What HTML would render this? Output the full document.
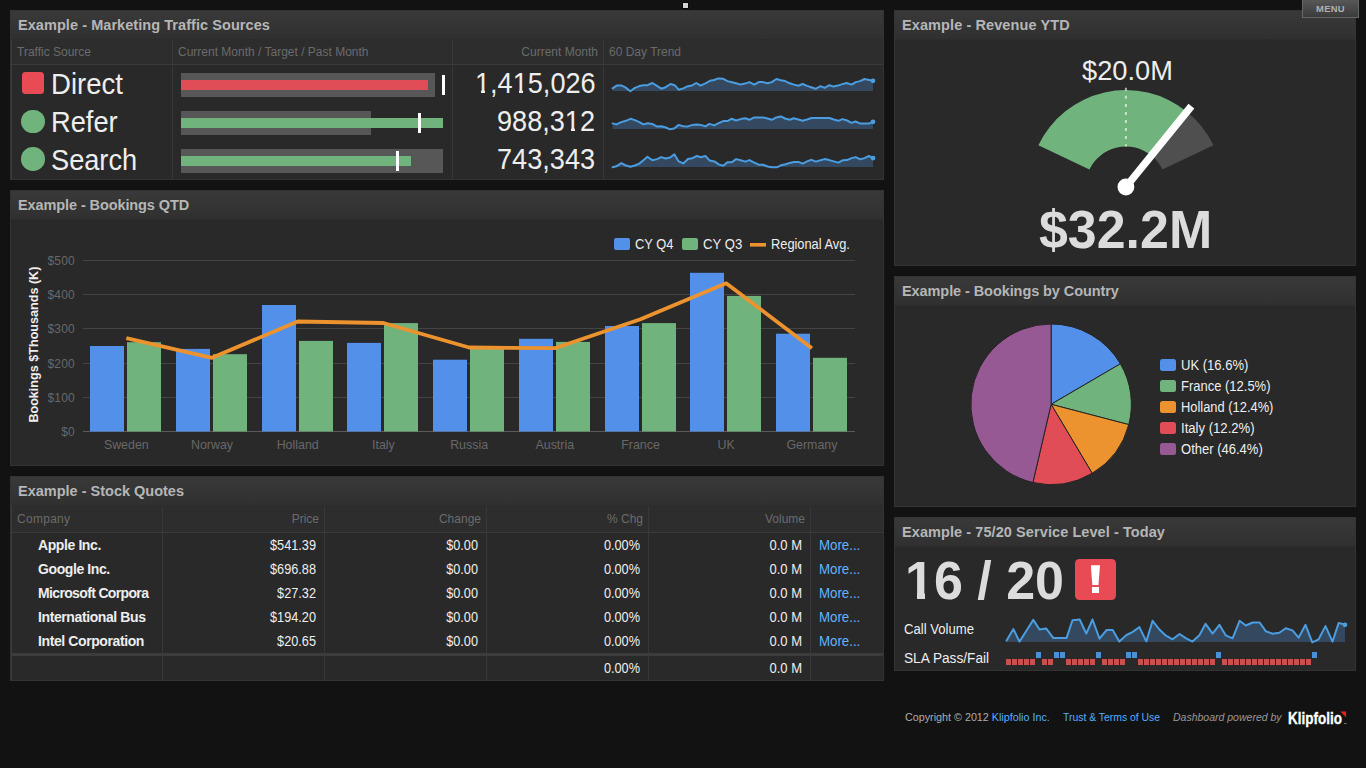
<!DOCTYPE html>
<html><head><meta charset="utf-8"><title>Dashboard</title>
<style>
html,body{margin:0;padding:0;}
body{width:1366px;height:768px;overflow:hidden;background:#121212;font-family:"Liberation Sans",sans-serif;color:#eee;position:relative;}
.p{position:absolute;background:#292929;border:1px solid #333;box-sizing:border-box;}
.h{position:absolute;left:0;top:0;right:0;height:28px;background:linear-gradient(#393939,#303030);border-bottom:1px solid #2c2c2c;}
.h span{position:absolute;left:7px;top:6px;font-weight:bold;font-size:14.5px;line-height:17px;color:#b6b6b6;letter-spacing:0.06px;white-space:nowrap;}
.t{position:absolute;white-space:nowrap;}
.th{position:absolute;font-size:12px;color:#6b6b6b;line-height:14px;white-space:nowrap;}
.vl{position:absolute;width:1px;background:#383838;}
.hl{position:absolute;height:1px;background:#3a3a3a;}
svg{position:absolute;left:0;top:0;}
.cv{position:absolute;background:#292929;}
svg text{font-family:"Liberation Sans",sans-serif;}
a{color:#62b3ff;text-decoration:none;}
</style></head><body>

<!-- top widgets -->
<div style="position:absolute;left:683px;top:3px;width:5px;height:5px;background:#d2d2d2;box-shadow:0 0 0 1px #060606;"></div>


<!-- panel 1 : traffic sources -->
<div class="p" style="left:10px;top:10px;width:874px;height:170px;"><div class="h"><span style="letter-spacing:0.06px">Example - Marketing Traffic Sources</span></div>
<div style="position:absolute;left:0;top:29px;right:0;height:25px;background:#2d2d2d;"></div></div>
<div class="hl" style="left:11px;top:64px;width:872px;"></div>
<div class="vl" style="left:11px;top:40px;height:139px;background:#3b3b3b;"></div>
<div class="vl" style="left:172px;top:40px;height:139px;"></div>
<div class="vl" style="left:452px;top:40px;height:139px;"></div>
<div class="vl" style="left:603px;top:40px;height:139px;"></div>
<div class="th" style="left:17px;top:45px;">Traffic Source</div>
<div class="th" style="left:178px;top:45px;">Current Month / Target / Past Month</div>
<div class="th" style="left:452px;top:45px;width:146px;text-align:right;">Current Month</div>
<div class="th" style="left:609px;top:45px;">60 Day Trend</div>

<div style="position:absolute;left:22.3px;top:72px;width:22px;height:22px;border-radius:3.5px;background:#e94b55;"></div>
<div style="position:absolute;left:21.3px;top:109.5px;width:23.6px;height:23.6px;border-radius:50%;background:#71b37c;"></div>
<div style="position:absolute;left:21.3px;top:147.4px;width:23.6px;height:23.6px;border-radius:50%;background:#71b37c;"></div>
<div class="t" style="left:51.16px;top:70.0px;font-size:29px;line-height:1;font-weight:normal;color:#eee;transform-origin:0 0;transform:scaleX(0.9497);">Direct</div>
<div class="t" style="left:51.18px;top:108.0px;font-size:29px;line-height:1;font-weight:normal;color:#eee;transform-origin:0 0;transform:scaleX(0.9405);">Refer</div>
<div class="t" style="left:51.07px;top:146.0px;font-size:29px;line-height:1;font-weight:normal;color:#eee;transform-origin:0 0;transform:scaleX(0.9372);">Search</div>

<!-- bullet bars -->
<div style="position:absolute;left:181px;top:73px;width:254px;height:24px;background:#575757;"></div>
<div style="position:absolute;left:181px;top:80px;width:247px;height:10px;background:#e14d57;"></div>
<div style="position:absolute;left:442px;top:75px;width:3px;height:20px;background:#fff;"></div>
<div style="position:absolute;left:181px;top:111px;width:190px;height:24px;background:#575757;"></div>
<div style="position:absolute;left:181px;top:118px;width:262px;height:10px;background:#71b37c;"></div>
<div style="position:absolute;left:418px;top:113px;width:3px;height:20px;background:#fff;"></div>
<div style="position:absolute;left:181px;top:149px;width:262px;height:24px;background:#575757;"></div>
<div style="position:absolute;left:181px;top:156px;width:230px;height:10px;background:#71b37c;"></div>
<div style="position:absolute;left:396px;top:151px;width:3px;height:20px;background:#fff;"></div>

<div class="t" style="left:474.55px;top:68.0px;font-size:29.5px;line-height:1;font-weight:normal;color:#eee;transform-origin:0 0;transform:scaleX(0.9194);">1,415,026</div>
<div class="t" style="left:496.58px;top:106.0px;font-size:29.5px;line-height:1;font-weight:normal;color:#eee;transform-origin:0 0;transform:scaleX(0.9191);">988,312</div>
<div class="t" style="left:496.51px;top:144.0px;font-size:29.5px;line-height:1;font-weight:normal;color:#eee;transform-origin:0 0;transform:scaleX(0.9198);">743,343</div>

<!-- panel 2 : bookings QTD -->
<div class="p" style="left:10px;top:190px;width:874px;height:276px;"><div class="h"><span style="letter-spacing:-0.097px">Example - Bookings QTD</span></div></div>

<!-- panel 3 : stock quotes -->
<div class="p" style="left:10px;top:476px;width:874px;height:205px;"><div class="h"><span style="letter-spacing:0.0px">Example - Stock Quotes</span></div>
<div style="position:absolute;left:0;top:29px;right:0;height:27px;background:#2d2d2d;"></div></div>
<div class="hl" style="left:11px;top:532px;width:872px;"></div>
<div class="vl" style="left:162px;top:506px;height:174px;"></div>
<div class="vl" style="left:324px;top:506px;height:174px;"></div>
<div class="vl" style="left:486px;top:506px;height:174px;"></div>
<div class="vl" style="left:648px;top:506px;height:174px;"></div>
<div class="vl" style="left:810px;top:506px;height:174px;"></div>
<div class="vl" style="left:11px;top:506px;height:174px;background:#3b3b3b;"></div>
<div style="position:absolute;left:11px;top:653px;width:872px;height:3px;background:#3c3c3c;"></div>
<div class="th" style="left:17px;top:512px;letter-spacing:0.28px;">Company</div>
<div class="th" style="left:169px;width:150px;text-align:right;top:512px;">Price</div>
<div class="th" style="left:331px;width:150px;text-align:right;top:512px;">Change</div>
<div class="th" style="left:493px;width:150px;text-align:right;top:512px;">% Chg</div>
<div class="th" style="left:655px;width:150px;text-align:right;top:512px;">Volume</div>
<div class="t" style="left:38px;top:537px;font-size:14px;line-height:16px;font-weight:bold;letter-spacing:-0.4px;color:#eee;">Apple Inc.</div>
<div class="t" style="left:166px;width:150px;text-align:right;top:537px;font-size:14px;line-height:16px;transform:scaleX(0.908);transform-origin:100% 50%;color:#eee;">$541.39</div>
<div class="t" style="left:328px;width:150px;text-align:right;top:537px;font-size:14px;line-height:16px;transform:scaleX(0.908);transform-origin:100% 50%;color:#eee;">$0.00</div>
<div class="t" style="left:490px;width:150px;text-align:right;top:537px;font-size:14px;line-height:16px;transform:scaleX(0.908);transform-origin:100% 50%;color:#eee;">0.00%</div>
<div class="t" style="left:652px;width:150px;text-align:right;top:537px;font-size:14px;line-height:16px;transform:scaleX(0.93);transform-origin:100% 50%;color:#eee;">0.0 M</div>
<div class="t" style="left:818.9px;top:537px;font-size:14px;line-height:16px;transform:scaleX(0.948);transform-origin:0 50%;"><a>More...</a></div>
<div class="t" style="left:38px;top:561px;font-size:14px;line-height:16px;font-weight:bold;letter-spacing:-0.4px;color:#eee;">Google Inc.</div>
<div class="t" style="left:166px;width:150px;text-align:right;top:561px;font-size:14px;line-height:16px;transform:scaleX(0.908);transform-origin:100% 50%;color:#eee;">$696.88</div>
<div class="t" style="left:328px;width:150px;text-align:right;top:561px;font-size:14px;line-height:16px;transform:scaleX(0.908);transform-origin:100% 50%;color:#eee;">$0.00</div>
<div class="t" style="left:490px;width:150px;text-align:right;top:561px;font-size:14px;line-height:16px;transform:scaleX(0.908);transform-origin:100% 50%;color:#eee;">0.00%</div>
<div class="t" style="left:652px;width:150px;text-align:right;top:561px;font-size:14px;line-height:16px;transform:scaleX(0.93);transform-origin:100% 50%;color:#eee;">0.0 M</div>
<div class="t" style="left:818.9px;top:561px;font-size:14px;line-height:16px;transform:scaleX(0.948);transform-origin:0 50%;"><a>More...</a></div>
<div class="t" style="left:38px;top:585px;font-size:14px;line-height:16px;font-weight:bold;letter-spacing:-0.65px;color:#eee;">Microsoft Corpora</div>
<div class="t" style="left:166px;width:150px;text-align:right;top:585px;font-size:14px;line-height:16px;transform:scaleX(0.908);transform-origin:100% 50%;color:#eee;">$27.32</div>
<div class="t" style="left:328px;width:150px;text-align:right;top:585px;font-size:14px;line-height:16px;transform:scaleX(0.908);transform-origin:100% 50%;color:#eee;">$0.00</div>
<div class="t" style="left:490px;width:150px;text-align:right;top:585px;font-size:14px;line-height:16px;transform:scaleX(0.908);transform-origin:100% 50%;color:#eee;">0.00%</div>
<div class="t" style="left:652px;width:150px;text-align:right;top:585px;font-size:14px;line-height:16px;transform:scaleX(0.93);transform-origin:100% 50%;color:#eee;">0.0 M</div>
<div class="t" style="left:818.9px;top:585px;font-size:14px;line-height:16px;transform:scaleX(0.948);transform-origin:0 50%;"><a>More...</a></div>
<div class="t" style="left:38px;top:609px;font-size:14px;line-height:16px;font-weight:bold;letter-spacing:-0.4px;color:#eee;">International Bus</div>
<div class="t" style="left:166px;width:150px;text-align:right;top:609px;font-size:14px;line-height:16px;transform:scaleX(0.908);transform-origin:100% 50%;color:#eee;">$194.20</div>
<div class="t" style="left:328px;width:150px;text-align:right;top:609px;font-size:14px;line-height:16px;transform:scaleX(0.908);transform-origin:100% 50%;color:#eee;">$0.00</div>
<div class="t" style="left:490px;width:150px;text-align:right;top:609px;font-size:14px;line-height:16px;transform:scaleX(0.908);transform-origin:100% 50%;color:#eee;">0.00%</div>
<div class="t" style="left:652px;width:150px;text-align:right;top:609px;font-size:14px;line-height:16px;transform:scaleX(0.93);transform-origin:100% 50%;color:#eee;">0.0 M</div>
<div class="t" style="left:818.9px;top:609px;font-size:14px;line-height:16px;transform:scaleX(0.948);transform-origin:0 50%;"><a>More...</a></div>
<div class="t" style="left:38px;top:633px;font-size:14px;line-height:16px;font-weight:bold;letter-spacing:-0.4px;color:#eee;">Intel Corporation</div>
<div class="t" style="left:166px;width:150px;text-align:right;top:633px;font-size:14px;line-height:16px;transform:scaleX(0.908);transform-origin:100% 50%;color:#eee;">$20.65</div>
<div class="t" style="left:328px;width:150px;text-align:right;top:633px;font-size:14px;line-height:16px;transform:scaleX(0.908);transform-origin:100% 50%;color:#eee;">$0.00</div>
<div class="t" style="left:490px;width:150px;text-align:right;top:633px;font-size:14px;line-height:16px;transform:scaleX(0.908);transform-origin:100% 50%;color:#eee;">0.00%</div>
<div class="t" style="left:652px;width:150px;text-align:right;top:633px;font-size:14px;line-height:16px;transform:scaleX(0.93);transform-origin:100% 50%;color:#eee;">0.0 M</div>
<div class="t" style="left:818.9px;top:633px;font-size:14px;line-height:16px;transform:scaleX(0.948);transform-origin:0 50%;"><a>More...</a></div>
<div class="t" style="left:490px;width:150px;text-align:right;top:660px;font-size:14px;line-height:16px;transform:scaleX(0.908);transform-origin:100% 50%;color:#eee;">0.00%</div>
<div class="t" style="left:652px;width:150px;text-align:right;top:660px;font-size:14px;line-height:16px;transform:scaleX(0.93);transform-origin:100% 50%;color:#eee;">0.0 M</div>

<!-- panel 4 : revenue -->
<div class="p" style="left:894px;top:10px;width:462px;height:256px;"><div class="h"><span style="letter-spacing:0.095px">Example - Revenue YTD</span></div></div>
<div class="t" style="left:1082.01px;top:56.0px;font-size:28.3px;line-height:1;font-weight:normal;color:#eee;transform-origin:0 0;transform:scaleX(0.9625);">$20.0M</div>
<div class="t" style="left:1039.17px;top:202.6px;font-size:53.7px;line-height:1;font-weight:bold;color:#dcdcdc;transform-origin:0 0;transform:scaleX(0.9668);">$32.2M</div>

<!-- panel 5 : pie -->
<div class="p" style="left:894px;top:276px;width:462px;height:231px;"><div class="h"><span style="letter-spacing:-0.08px">Example - Bookings by Country</span></div></div>

<!-- panel 6 : service level -->
<div class="p" style="left:894px;top:517px;width:462px;height:154px;"><div class="h"><span style="letter-spacing:0.08px">Example - 75/20 Service Level - Today</span></div></div>
<div class="t" style="left:905.34px;top:552.64px;font-size:54.2px;line-height:1;font-weight:bold;color:#dcdcdc;transform-origin:0 0;transform:scaleX(0.9596);">16 / 20</div>
<div style="position:absolute;left:1074.8px;top:558.6px;width:41.4px;height:41.4px;border-radius:4.5px;background:#e94b55;"></div>
<div style="position:absolute;left:1090.8px;top:565.2px;width:9.2px;height:20px;background:#fff;clip-path:polygon(0 0,100% 0,83% 100%,17% 100%);"></div>
<div style="position:absolute;left:1091.8px;top:587.1px;width:7.3px;height:6px;background:#fff;"></div>
<div class="t" style="left:635.01px;top:237px;font-size:14px;line-height:1;font-weight:normal;color:#eee;transform-origin:0 0;transform:scaleX(0.9195);">CY Q4</div><div class="t" style="left:703.03px;top:237px;font-size:14px;line-height:1;font-weight:normal;color:#eee;transform-origin:0 0;transform:scaleX(0.9388);">CY Q3</div><div class="t" style="left:770.65px;top:237px;font-size:14px;line-height:1;font-weight:normal;color:#eee;transform-origin:0 0;transform:scaleX(0.9153);">Regional Avg.</div>
<div class="t" style="left:1180.95px;top:358px;font-size:14px;line-height:1;font-weight:normal;color:#eee;transform-origin:0 0;transform:scaleX(0.9307);">UK (16.6%)</div><div class="t" style="left:1181.25px;top:379px;font-size:14px;line-height:1;font-weight:normal;color:#eee;transform-origin:0 0;transform:scaleX(0.9275);">France (12.5%)</div><div class="t" style="left:1181.15px;top:400px;font-size:14px;line-height:1;font-weight:normal;color:#eee;transform-origin:0 0;transform:scaleX(0.9202);">Holland (12.4%)</div><div class="t" style="left:1180.84px;top:421px;font-size:14px;line-height:1;font-weight:normal;color:#eee;transform-origin:0 0;transform:scaleX(0.9371);">Italy (12.2%)</div><div class="t" style="left:1181.03px;top:442px;font-size:14px;line-height:1;font-weight:normal;color:#eee;transform-origin:0 0;transform:scaleX(0.93);">Other (46.4%)</div>
<div class="t" style="left:904.03px;top:622px;font-size:14px;line-height:1;font-weight:normal;color:#eee;transform-origin:0 0;transform:scaleX(0.9368);">Call Volume</div><div class="t" style="left:903.92px;top:651px;font-size:14px;line-height:1;font-weight:normal;color:#eee;transform-origin:0 0;transform:scaleX(0.9766);">SLA Pass/Fail</div>


<div style="position:absolute;left:1302px;top:-1px;width:55px;height:16.6px;border:1px solid #656565;background:linear-gradient(#575757,#3b3b3b);"></div>
<div class="t" style="left:1302px;top:3px;width:57px;text-align:center;font-size:9.4px;letter-spacing:0.35px;font-weight:bold;color:#b0b0b0;line-height:11px;">MENU</div>

<div class="cv" style="left:475.2px;top:89.8px;width:5.7px;height:4.2px;"></div><div class="cv" style="left:485.3px;top:89.8px;width:4.6px;height:4.2px;"></div>
<div class="cv" style="left:513.2px;top:89.8px;width:5.4px;height:4.2px;"></div><div class="cv" style="left:523px;top:89.8px;width:4.6px;height:4.2px;"></div>
<div class="cv" style="left:565.2px;top:127.8px;width:5.4px;height:4.2px;"></div><div class="cv" style="left:575.1px;top:127.8px;width:4.9px;height:4.2px;"></div>
<div class="cv" style="left:905px;top:592.3px;width:11.5px;height:8.5px;"></div><div class="cv" style="left:924.6px;top:592.3px;width:9.6px;height:8.5px;"></div>
<!-- footer -->
<div class="t" style="left:905px;top:711px;font-size:10.75px;line-height:13px;color:#adadad;">Copyright © 2012 <a style="color:#55adff">Klipfolio Inc.</a></div>
<div class="t" style="left:1063px;top:711px;font-size:10.4px;line-height:13px;"><a style="color:#55adff">Trust &amp; Terms of Use</a></div>
<div class="t" style="left:1173px;top:711px;font-size:10.5px;line-height:13px;font-style:italic;color:#999;">Dashboard powered by</div>
<div class="t" style="-webkit-text-stroke:0.35px #fff;left:1288.03px;top:710.0px;font-size:17.4px;line-height:1;font-weight:bold;color:#fff;transform-origin:0 0;transform:scaleX(0.7752);">Klipfolio</div>
<svg width="1366" height="768" viewBox="0 0 1366 768" style="pointer-events:none"><polygon points="1340.3,711.6 1346.1,711.6 1346.1,717.2" fill="#ee1c25"/><rect x="1344" y="723" width="2.5" height="1" fill="#777"/></svg>

<svg width="1366" height="768" viewBox="0 0 1366 768">
<polygon points="612.6,91.0 612.6,88.4 617.0,85.4 621.3,85.4 625.4,87.4 630.3,91.3 634.9,87.9 639.3,86.1 643.4,85.2 647.5,85.2 652.3,83.0 657.0,85.9 661.3,88.7 665.6,87.2 670.5,84.0 674.6,85.2 678.7,89.7 683.3,88.4 687.9,86.2 692.0,85.4 696.3,83.0 700.5,85.6 705.4,83.3 710.0,80.8 714.1,80.0 718.2,78.4 722.8,78.7 727.4,81.1 732.0,82.3 736.1,83.3 740.7,84.6 745.1,83.6 749.4,82.1 754.3,84.6 758.7,82.1 763.1,82.1 767.5,83.3 771.8,82.1 776.4,79.0 780.8,80.2 785.1,81.1 789.7,83.3 794.1,84.6 798.4,85.7 802.7,84.0 807.1,85.9 811.2,87.2 815.6,88.8 820.5,86.2 824.6,87.9 829.4,85.2 833.5,86.6 837.9,85.6 842.3,84.1 846.6,83.0 851.5,84.6 855.8,82.1 860.1,81.1 864.5,79.0 868.9,79.9 873.0,80.8 873.0,91.0" fill="#34495f"/><polyline points="612.6,88.4 617.0,85.4 621.3,85.4 625.4,87.4 630.3,91.3 634.9,87.9 639.3,86.1 643.4,85.2 647.5,85.2 652.3,83.0 657.0,85.9 661.3,88.7 665.6,87.2 670.5,84.0 674.6,85.2 678.7,89.7 683.3,88.4 687.9,86.2 692.0,85.4 696.3,83.0 700.5,85.6 705.4,83.3 710.0,80.8 714.1,80.0 718.2,78.4 722.8,78.7 727.4,81.1 732.0,82.3 736.1,83.3 740.7,84.6 745.1,83.6 749.4,82.1 754.3,84.6 758.7,82.1 763.1,82.1 767.5,83.3 771.8,82.1 776.4,79.0 780.8,80.2 785.1,81.1 789.7,83.3 794.1,84.6 798.4,85.7 802.7,84.0 807.1,85.9 811.2,87.2 815.6,88.8 820.5,86.2 824.6,87.9 829.4,85.2 833.5,86.6 837.9,85.6 842.3,84.1 846.6,83.0 851.5,84.6 855.8,82.1 860.1,81.1 864.5,79.0 868.9,79.9 873.0,80.8" fill="none" stroke="#4a9de0" stroke-width="2" stroke-linejoin="round" stroke-linecap="round"/><circle cx="873.0" cy="80.8" r="2.4" fill="#4a9de0"/>
<polygon points="612.6,129.0 612.6,123.4 616.4,124.4 621.3,122.1 625.9,120.8 630.5,118.8 634.9,120.1 639.3,122.1 643.4,124.4 647.8,123.2 652.1,123.9 656.7,126.4 661.3,126.2 665.9,127.5 670.0,129.3 674.1,128.5 678.7,124.9 683.3,126.2 687.9,126.4 692.6,124.9 696.7,124.6 700.8,124.9 705.4,126.4 709.5,123.9 714.1,125.4 718.7,123.2 723.3,121.1 727.4,121.1 731.5,118.8 736.1,120.5 740.7,119.1 745.3,118.2 749.4,119.8 754.3,117.4 758.7,117.4 763.1,117.4 767.5,118.5 771.8,119.8 776.4,117.4 780.8,116.4 785.1,118.5 789.7,119.8 793.8,118.2 798.4,119.5 802.7,120.8 807.1,119.5 811.5,118.0 815.8,118.0 820.5,118.0 824.9,118.0 829.4,118.0 833.8,119.5 838.4,120.8 842.5,119.1 847.1,120.5 851.5,122.9 855.6,121.5 860.4,123.6 864.5,123.6 868.9,123.6 873.0,121.8 873.0,129.0" fill="#34495f"/><polyline points="612.6,123.4 616.4,124.4 621.3,122.1 625.9,120.8 630.5,118.8 634.9,120.1 639.3,122.1 643.4,124.4 647.8,123.2 652.1,123.9 656.7,126.4 661.3,126.2 665.9,127.5 670.0,129.3 674.1,128.5 678.7,124.9 683.3,126.2 687.9,126.4 692.6,124.9 696.7,124.6 700.8,124.9 705.4,126.4 709.5,123.9 714.1,125.4 718.7,123.2 723.3,121.1 727.4,121.1 731.5,118.8 736.1,120.5 740.7,119.1 745.3,118.2 749.4,119.8 754.3,117.4 758.7,117.4 763.1,117.4 767.5,118.5 771.8,119.8 776.4,117.4 780.8,116.4 785.1,118.5 789.7,119.8 793.8,118.2 798.4,119.5 802.7,120.8 807.1,119.5 811.5,118.0 815.8,118.0 820.5,118.0 824.9,118.0 829.4,118.0 833.8,119.5 838.4,120.8 842.5,119.1 847.1,120.5 851.5,122.9 855.6,121.5 860.4,123.6 864.5,123.6 868.9,123.6 873.0,121.8" fill="none" stroke="#4a9de0" stroke-width="2" stroke-linejoin="round" stroke-linecap="round"/><circle cx="873.0" cy="121.8" r="2.4" fill="#4a9de0"/>
<polygon points="612.6,167.0 612.6,167.3 616.4,166.3 621.3,163.2 625.9,165.5 630.5,166.7 634.9,165.5 639.3,163.6 643.4,160.3 647.5,156.8 652.3,160.3 657.0,159.1 661.3,157.1 665.6,158.5 670.0,157.5 674.4,154.4 678.7,161.4 683.3,163.4 687.9,159.1 692.2,158.3 696.7,156.0 700.8,157.3 705.4,156.0 709.7,160.6 714.4,161.4 718.7,164.4 723.3,165.7 727.4,162.2 731.8,162.2 736.1,159.1 740.7,160.3 745.3,161.6 749.4,160.1 754.3,162.6 758.7,164.7 763.1,164.7 767.5,166.5 772.0,167.3 776.7,167.3 781.0,165.3 785.6,164.2 789.7,162.9 794.1,161.9 798.4,161.9 802.7,163.6 807.1,161.4 811.5,159.8 815.8,161.6 820.5,160.3 824.6,159.1 829.2,160.1 833.8,161.4 838.4,162.6 842.5,160.3 847.1,160.1 851.5,158.1 855.6,157.1 860.4,159.3 864.5,158.1 868.9,156.0 873.0,158.1 873.0,167.0" fill="#34495f"/><polyline points="612.6,167.3 616.4,166.3 621.3,163.2 625.9,165.5 630.5,166.7 634.9,165.5 639.3,163.6 643.4,160.3 647.5,156.8 652.3,160.3 657.0,159.1 661.3,157.1 665.6,158.5 670.0,157.5 674.4,154.4 678.7,161.4 683.3,163.4 687.9,159.1 692.2,158.3 696.7,156.0 700.8,157.3 705.4,156.0 709.7,160.6 714.4,161.4 718.7,164.4 723.3,165.7 727.4,162.2 731.8,162.2 736.1,159.1 740.7,160.3 745.3,161.6 749.4,160.1 754.3,162.6 758.7,164.7 763.1,164.7 767.5,166.5 772.0,167.3 776.7,167.3 781.0,165.3 785.6,164.2 789.7,162.9 794.1,161.9 798.4,161.9 802.7,163.6 807.1,161.4 811.5,159.8 815.8,161.6 820.5,160.3 824.6,159.1 829.2,160.1 833.8,161.4 838.4,162.6 842.5,160.3 847.1,160.1 851.5,158.1 855.6,157.1 860.4,159.3 864.5,158.1 868.9,156.0 873.0,158.1" fill="none" stroke="#4a9de0" stroke-width="2" stroke-linejoin="round" stroke-linecap="round"/><circle cx="873.0" cy="158.1" r="2.4" fill="#4a9de0"/>
<rect x="83" y="431" width="772" height="1" fill="#5a5a5a"/><text x="75" y="436.0" text-anchor="end" font-size="12" letter-spacing="0.2" fill="#686868">$0</text><rect x="83" y="397" width="772" height="1" fill="#444"/><text x="75" y="401.8" text-anchor="end" font-size="12" letter-spacing="0.2" fill="#686868">$100</text><rect x="83" y="363" width="772" height="1" fill="#444"/><text x="75" y="367.6" text-anchor="end" font-size="12" letter-spacing="0.2" fill="#686868">$200</text><rect x="83" y="328" width="772" height="1" fill="#444"/><text x="75" y="333.4" text-anchor="end" font-size="12" letter-spacing="0.2" fill="#686868">$300</text><rect x="83" y="294" width="772" height="1" fill="#444"/><text x="75" y="299.2" text-anchor="end" font-size="12" letter-spacing="0.2" fill="#686868">$400</text><rect x="83" y="260" width="772" height="1" fill="#444"/><text x="75" y="265.0" text-anchor="end" font-size="12" letter-spacing="0.2" fill="#686868">$500</text><rect x="90.0" y="346.0" width="34" height="85.5" fill="#5290e9"/><rect x="127.0" y="342.2" width="34" height="89.3" fill="#71b37c"/><text x="126.3" y="449" text-anchor="middle" font-size="12.4" fill="#686868">Sweden</text><rect x="176.0" y="348.9" width="34" height="82.6" fill="#5290e9"/><rect x="213.0" y="354.2" width="34" height="77.3" fill="#71b37c"/><text x="212.0" y="449" text-anchor="middle" font-size="12.4" fill="#686868">Norway</text><rect x="262.0" y="305.0" width="34" height="126.5" fill="#5290e9"/><rect x="299.0" y="340.9" width="34" height="90.6" fill="#71b37c"/><text x="297.7" y="449" text-anchor="middle" font-size="12.4" fill="#686868">Holland</text><rect x="347.0" y="342.9" width="34" height="88.6" fill="#5290e9"/><rect x="384.0" y="323.1" width="34" height="108.4" fill="#71b37c"/><text x="383.4" y="449" text-anchor="middle" font-size="12.4" fill="#686868">Italy</text><rect x="433.0" y="359.7" width="34" height="71.8" fill="#5290e9"/><rect x="470.0" y="348.2" width="34" height="83.3" fill="#71b37c"/><text x="469.1" y="449" text-anchor="middle" font-size="12.4" fill="#686868">Russia</text><rect x="519.0" y="338.8" width="34" height="92.7" fill="#5290e9"/><rect x="556.0" y="341.9" width="34" height="89.6" fill="#71b37c"/><text x="554.8" y="449" text-anchor="middle" font-size="12.4" fill="#686868">Austria</text><rect x="605.0" y="326.0" width="34" height="105.5" fill="#5290e9"/><rect x="642.0" y="323.1" width="34" height="108.4" fill="#71b37c"/><text x="640.5" y="449" text-anchor="middle" font-size="12.4" fill="#686868">France</text><rect x="690.0" y="272.8" width="34" height="158.7" fill="#5290e9"/><rect x="727.0" y="295.9" width="34" height="135.6" fill="#71b37c"/><text x="726.2" y="449" text-anchor="middle" font-size="12.4" fill="#686868">UK</text><rect x="776.0" y="333.7" width="34" height="97.8" fill="#5290e9"/><rect x="813.0" y="357.8" width="34" height="73.7" fill="#71b37c"/><text x="811.9" y="449" text-anchor="middle" font-size="12.4" fill="#686868">Germany</text><polyline points="126.3,338.2 212.0,357.8 297.7,321.5 383.4,323.0 469.1,347.5 554.8,348.2 640.5,319.3 726.2,283.3 811.9,348.2" fill="none" stroke="#ec932f" stroke-width="3.8" stroke-linejoin="round"/><text transform="translate(37.6,344.6) rotate(-90)" text-anchor="middle" font-size="12.6" font-weight="bold" fill="#eee">Bookings $Thousands (K)</text><rect x="614" y="238" width="16" height="12" rx="2" fill="#5290e9"/><rect x="682" y="238" width="16" height="12" rx="2" fill="#71b37c"/><rect x="750" y="243" width="16" height="3.6" fill="#ec932f"/>
<path d="M1038.4,145.3 A96.9,96.9 0 0 1 1186.9,111.7 L1151.4,155.6 A40.4,40.4 0 0 0 1089.4,169.6 Z" fill="#71b37c"/><path d="M1186.9,111.7 A96.9,96.9 0 0 1 1213.4,145.3 L1162.4,169.6 A40.4,40.4 0 0 0 1151.4,155.6 Z" fill="#4f4f4f"/><line x1="1125.9" y1="87.8" x2="1125.9" y2="146.6" stroke="#fff" stroke-opacity="0.62" stroke-width="2" stroke-dasharray="3,5.05"/><line x1="1125.9" y1="187.0" x2="1191.4" y2="106.2" stroke="#fff" stroke-width="7.5"/><circle cx="1125.9" cy="187.0" r="8.4" fill="#fff"/>
<path d="M1051.1,404.3 L1051.1,324.0 A80.3,80.3 0 0 1 1120.4,363.8 Z" fill="#5290e9" stroke="#242424" stroke-width="1"/><path d="M1051.1,404.3 L1120.4,363.8 A80.3,80.3 0 0 1 1128.8,424.6 Z" fill="#71b37c" stroke="#242424" stroke-width="1"/><path d="M1051.1,404.3 L1128.8,424.6 A80.3,80.3 0 0 1 1092.2,473.3 Z" fill="#ec932f" stroke="#242424" stroke-width="1"/><path d="M1051.1,404.3 L1092.2,473.3 A80.3,80.3 0 0 1 1032.9,482.5 Z" fill="#e14d57" stroke="#242424" stroke-width="1"/><path d="M1051.1,404.3 L1032.9,482.5 A80.3,80.3 0 0 1 1051.1,324.0 Z" fill="#965994" stroke="#242424" stroke-width="1"/><rect x="1160" y="359" width="16" height="12" rx="2.5" fill="#5290e9"/><rect x="1160" y="380" width="16" height="12" rx="2.5" fill="#71b37c"/><rect x="1160" y="401" width="16" height="12" rx="2.5" fill="#ec932f"/><rect x="1160" y="422" width="16" height="12" rx="2.5" fill="#e14d57"/><rect x="1160" y="443" width="16" height="12" rx="2.5" fill="#965994"/>
<polygon points="1006.6,642.0 1006.6,640.6 1013.4,629.1 1019.5,641.6 1026.4,630.8 1033.3,619.9 1039.5,629.5 1046.1,628.4 1053.4,638.1 1060.0,638.1 1066.5,638.1 1072.5,620.3 1079.7,619.5 1086.3,633.7 1092.5,619.5 1099.5,638.7 1106.7,630.0 1112.7,630.0 1119.3,641.6 1126.5,635.0 1132.4,632.1 1139.4,627.1 1146.3,641.4 1152.6,620.8 1159.4,629.5 1166.0,635.7 1172.6,639.3 1179.6,634.0 1186.2,638.3 1192.5,641.6 1199.4,635.3 1205.6,623.8 1212.6,633.7 1219.4,624.8 1225.7,635.3 1232.6,638.3 1239.6,620.8 1245.8,625.5 1252.7,622.5 1259.7,622.5 1265.9,631.3 1272.5,633.7 1279.4,632.7 1285.7,628.2 1292.5,630.4 1298.6,637.7 1305.5,624.8 1312.3,642.3 1318.6,639.3 1325.5,626.1 1332.5,641.6 1338.7,622.9 1345.0,624.8 1345.0,642.0" fill="#34495f"/><polyline points="1006.6,640.6 1013.4,629.1 1019.5,641.6 1026.4,630.8 1033.3,619.9 1039.5,629.5 1046.1,628.4 1053.4,638.1 1060.0,638.1 1066.5,638.1 1072.5,620.3 1079.7,619.5 1086.3,633.7 1092.5,619.5 1099.5,638.7 1106.7,630.0 1112.7,630.0 1119.3,641.6 1126.5,635.0 1132.4,632.1 1139.4,627.1 1146.3,641.4 1152.6,620.8 1159.4,629.5 1166.0,635.7 1172.6,639.3 1179.6,634.0 1186.2,638.3 1192.5,641.6 1199.4,635.3 1205.6,623.8 1212.6,633.7 1219.4,624.8 1225.7,635.3 1232.6,638.3 1239.6,620.8 1245.8,625.5 1252.7,622.5 1259.7,622.5 1265.9,631.3 1272.5,633.7 1279.4,632.7 1285.7,628.2 1292.5,630.4 1298.6,637.7 1305.5,624.8 1312.3,642.3 1318.6,639.3 1325.5,626.1 1332.5,641.6 1338.7,622.9 1345.0,624.8" fill="none" stroke="#4a9de0" stroke-width="2" stroke-linejoin="round" stroke-linecap="round"/><circle cx="1345.0" cy="624.8" r="2.4" fill="#4a9de0"/>
<rect x="1006" y="659" width="5" height="6" fill="#c9504f"/><rect x="1012" y="659" width="5" height="6" fill="#c9504f"/><rect x="1018" y="659" width="5" height="6" fill="#c9504f"/><rect x="1024" y="659" width="5" height="6" fill="#c9504f"/><rect x="1030" y="659" width="5" height="6" fill="#c9504f"/><rect x="1036" y="652" width="5" height="6" fill="#4a90d6"/><rect x="1042" y="659" width="5" height="6" fill="#c9504f"/><rect x="1048" y="659" width="5" height="6" fill="#c9504f"/><rect x="1054" y="652" width="5" height="6" fill="#4a90d6"/><rect x="1060" y="652" width="5" height="6" fill="#4a90d6"/><rect x="1066" y="659" width="5" height="6" fill="#c9504f"/><rect x="1072" y="659" width="5" height="6" fill="#c9504f"/><rect x="1078" y="659" width="5" height="6" fill="#c9504f"/><rect x="1084" y="659" width="5" height="6" fill="#c9504f"/><rect x="1090" y="659" width="5" height="6" fill="#c9504f"/><rect x="1096" y="652" width="5" height="6" fill="#4a90d6"/><rect x="1102" y="659" width="5" height="6" fill="#c9504f"/><rect x="1108" y="659" width="5" height="6" fill="#c9504f"/><rect x="1114" y="659" width="5" height="6" fill="#c9504f"/><rect x="1120" y="659" width="5" height="6" fill="#c9504f"/><rect x="1126" y="652" width="5" height="6" fill="#4a90d6"/><rect x="1132" y="652" width="5" height="6" fill="#4a90d6"/><rect x="1138" y="659" width="5" height="6" fill="#c9504f"/><rect x="1144" y="659" width="5" height="6" fill="#c9504f"/><rect x="1150" y="659" width="5" height="6" fill="#c9504f"/><rect x="1156" y="659" width="5" height="6" fill="#c9504f"/><rect x="1162" y="659" width="5" height="6" fill="#c9504f"/><rect x="1168" y="659" width="5" height="6" fill="#c9504f"/><rect x="1174" y="659" width="5" height="6" fill="#c9504f"/><rect x="1180" y="659" width="5" height="6" fill="#c9504f"/><rect x="1186" y="659" width="5" height="6" fill="#c9504f"/><rect x="1192" y="659" width="5" height="6" fill="#c9504f"/><rect x="1198" y="659" width="5" height="6" fill="#c9504f"/><rect x="1204" y="659" width="5" height="6" fill="#c9504f"/><rect x="1210" y="659" width="5" height="6" fill="#c9504f"/><rect x="1216" y="652" width="5" height="6" fill="#4a90d6"/><rect x="1222" y="659" width="5" height="6" fill="#c9504f"/><rect x="1228" y="659" width="5" height="6" fill="#c9504f"/><rect x="1234" y="659" width="5" height="6" fill="#c9504f"/><rect x="1240" y="659" width="5" height="6" fill="#c9504f"/><rect x="1246" y="659" width="5" height="6" fill="#c9504f"/><rect x="1252" y="659" width="5" height="6" fill="#c9504f"/><rect x="1258" y="659" width="5" height="6" fill="#c9504f"/><rect x="1264" y="659" width="5" height="6" fill="#c9504f"/><rect x="1270" y="659" width="5" height="6" fill="#c9504f"/><rect x="1276" y="659" width="5" height="6" fill="#c9504f"/><rect x="1282" y="659" width="5" height="6" fill="#c9504f"/><rect x="1288" y="659" width="5" height="6" fill="#c9504f"/><rect x="1294" y="659" width="5" height="6" fill="#c9504f"/><rect x="1300" y="659" width="5" height="6" fill="#c9504f"/><rect x="1306" y="659" width="5" height="6" fill="#c9504f"/><rect x="1312" y="652" width="5" height="6" fill="#4a90d6"/>
</svg>
</body></html>
